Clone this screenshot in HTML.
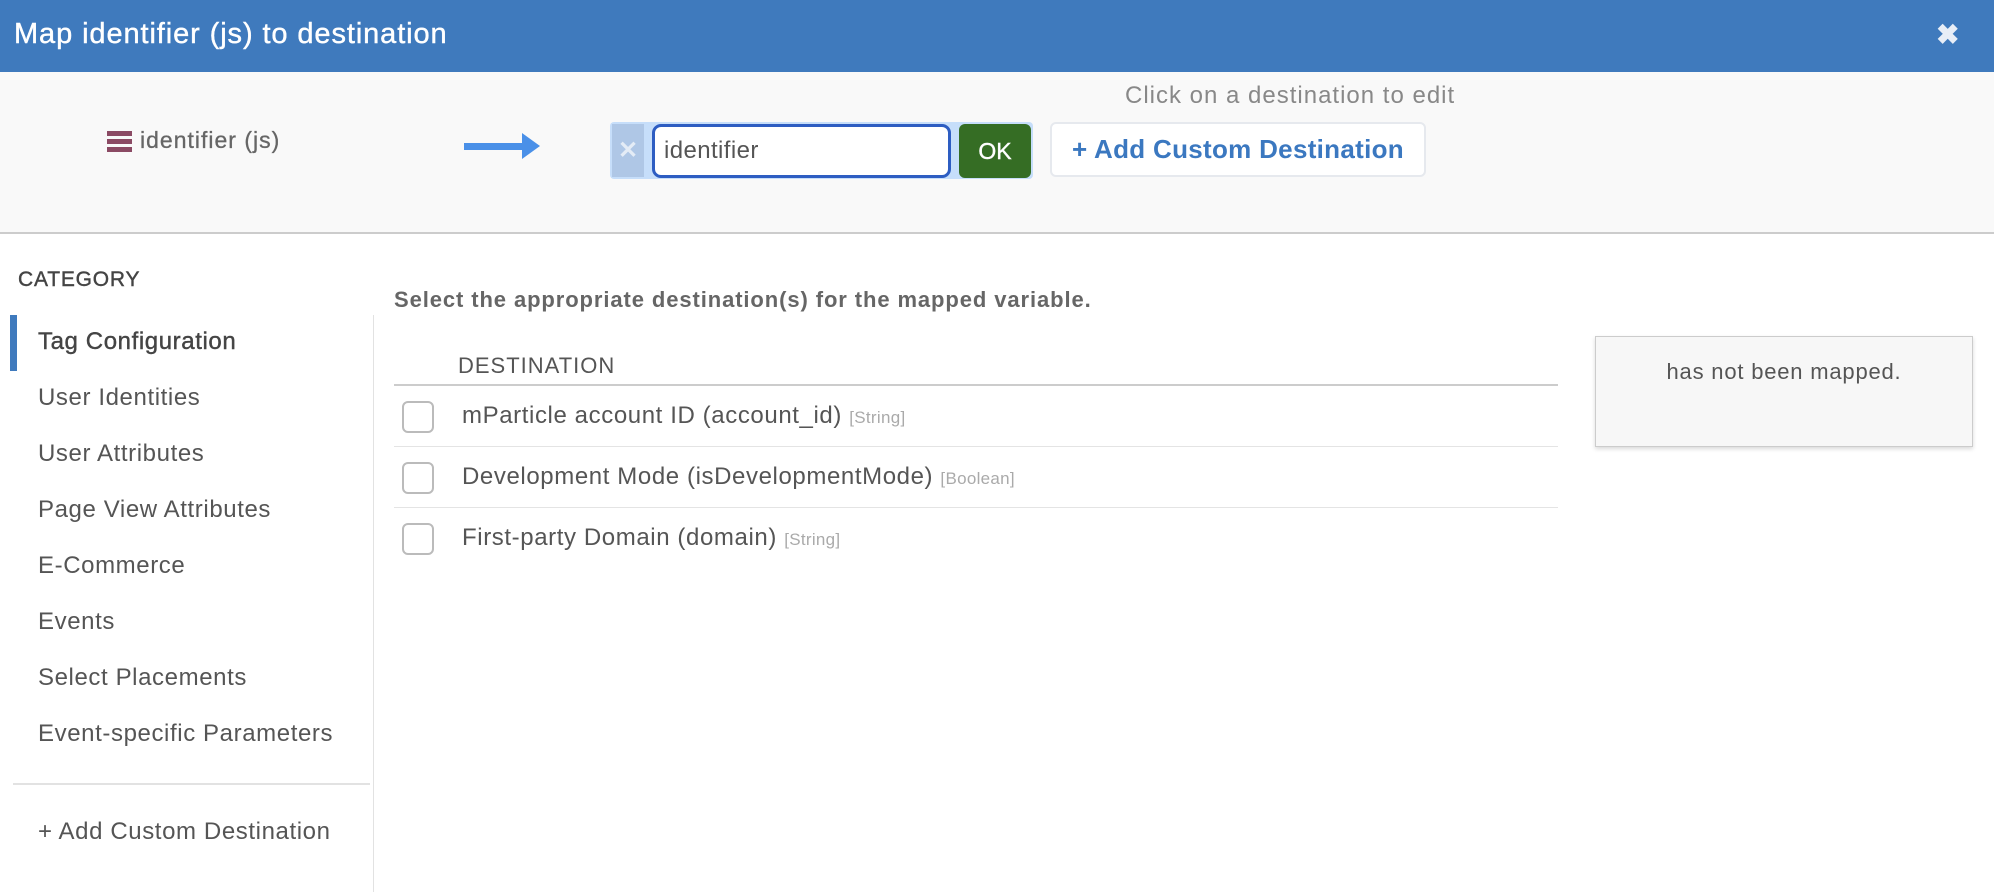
<!DOCTYPE html>
<html><head><meta charset="utf-8"><style>
*{margin:0;padding:0;box-sizing:border-box}
body{width:1994px;height:892px;background:#fff;font-family:"Liberation Sans",sans-serif;position:relative;overflow:hidden;color:#555}
.a{position:absolute;white-space:nowrap}
.s{font-size:24px;line-height:26px;letter-spacing:0.6px}
</style></head><body>
<div class="a" style="left:0;top:0;width:1994px;height:72px;background:#3f7abd"></div>
<div class="a" style="left:14px;top:17px;font-size:29px;color:#fff;line-height:34px;letter-spacing:0.9px;-webkit-text-stroke:0.4px #fff">Map identifier (js) to destination</div>
<div class="a" style="left:1936px;top:20px;font-size:28px;color:#e8eef7;font-weight:bold;line-height:30px">✖</div>
<div class="a" style="left:0;top:72px;width:1994px;height:162px;background:#f9f9f9;border-bottom:2px solid #ccc"></div>
<div class="a" style="left:107px;top:131px;width:25px;height:22px;background:linear-gradient(#8b4a64 0 5px,transparent 5px 8px,#8b4a64 8px 13px,transparent 13px 16px,#8b4a64 16px 21px,transparent 21px)"></div>
<div class="a" style="left:140px;top:127px;font-size:23px;color:#666;line-height:26px;letter-spacing:1px;-webkit-text-stroke:0.3px #666">identifier (js)</div>
<div class="a" style="left:464px;top:143px;width:60px;height:7px;background:#4a90e8"></div>
<div class="a" style="left:522px;top:133px;width:0;height:0;border-left:18px solid #4a90e8;border-top:13px solid transparent;border-bottom:13px solid transparent"></div>
<div class="a" style="left:610px;top:122px;width:423px;height:57px;background:#c6defa;border-radius:4px"></div>
<div class="a" style="left:612px;top:124px;width:32px;height:53px;background:#afc7e6;color:#e4ecf6;font-size:24px;font-weight:bold;text-align:center;line-height:53px">✕</div>
<div class="a" style="left:652px;top:124px;width:299px;height:54px;background:#fff;border:3px solid #2d5dc2;border-radius:9px;font-size:24px;color:#555;line-height:48px;padding-left:9px;letter-spacing:0.4px">identifier</div>
<div class="a" style="left:959px;top:124px;width:72px;height:54px;background:#356d24;border-radius:6px;color:#fff;font-size:23px;text-align:center;line-height:54px;-webkit-text-stroke:0.4px #fff">OK</div>
<div class="a" style="left:1125px;top:83px;font-size:24px;color:#888;line-height:26px;letter-spacing:1px">Click on a destination to edit</div>
<div class="a" style="left:1050px;top:122px;width:376px;height:55px;background:#fff;border:2px solid #e6e9ee;border-radius:6px;color:#3b78c0;font-size:26px;font-weight:bold;text-align:center;line-height:51px;letter-spacing:0.3px">+ Add Custom Destination</div>
<div class="a" style="left:18px;top:268px;font-size:21px;color:#444;line-height:24px;letter-spacing:0.8px;-webkit-text-stroke:0.4px #444">CATEGORY</div>
<div class="a" style="left:10px;top:315px;width:7px;height:56px;background:#3f7abd"></div>
<div class="a" style="left:373px;top:315px;width:1px;height:577px;background:#e2e2e2"></div>
<div class="a s" style="left:38px;top:329px;color:#444;-webkit-text-stroke:0.4px #444">Tag Configuration</div>
<div class="a s" style="left:38px;top:385px">User Identities</div>
<div class="a s" style="left:38px;top:441px">User Attributes</div>
<div class="a s" style="left:38px;top:497px">Page View Attributes</div>
<div class="a s" style="left:38px;top:553px">E-Commerce</div>
<div class="a s" style="left:38px;top:609px">Events</div>
<div class="a s" style="left:38px;top:665px">Select Placements</div>
<div class="a s" style="left:38px;top:721px">Event-specific Parameters</div>
<div class="a" style="left:13px;top:783px;width:357px;height:2px;background:#e2e2e2"></div>
<div class="a s" style="left:38px;top:819px">+ Add Custom Destination</div>
<div class="a" style="left:394px;top:288px;font-size:22px;font-weight:bold;color:#666;line-height:24px;letter-spacing:0.9px">Select the appropriate destination(s) for the mapped variable.</div>
<div class="a" style="left:458px;top:354px;font-size:22px;color:#555;line-height:24px;letter-spacing:1px">DESTINATION</div>
<div class="a" style="left:394px;top:384px;width:1164px;height:2px;background:#ccc"></div>
<div class="a" style="left:394px;top:446px;width:1164px;height:1px;background:#e4e4e4"></div>
<div class="a" style="left:394px;top:507px;width:1164px;height:1px;background:#e4e4e4"></div>
<div class="a" style="left:402px;top:401px;width:32px;height:32px;border:2px solid #bbb;border-radius:6px;background:#fff"></div>
<div class="a" style="left:402px;top:462px;width:32px;height:32px;border:2px solid #bbb;border-radius:6px;background:#fff"></div>
<div class="a" style="left:402px;top:523px;width:32px;height:32px;border:2px solid #bbb;border-radius:6px;background:#fff"></div>
<div class="a s" style="left:462px;top:403px">mParticle account ID (account_id) <span style="font-size:17px;color:#aaa;letter-spacing:0.3px">[String]</span></div>
<div class="a s" style="left:462px;top:464px">Development Mode (isDevelopmentMode) <span style="font-size:17px;color:#aaa;letter-spacing:0.3px">[Boolean]</span></div>
<div class="a s" style="left:462px;top:525px">First-party Domain (domain) <span style="font-size:17px;color:#aaa;letter-spacing:0.3px">[String]</span></div>
<div class="a" style="left:1595px;top:336px;width:378px;height:111px;background:#f7f7f7;border:1px solid #ccc;box-shadow:0 2px 4px rgba(0,0,0,.15)"></div>
<div class="a" style="left:1595px;top:360px;width:378px;text-align:center;font-size:22px;line-height:24px;color:#555;letter-spacing:0.8px">has not been mapped.</div>
</body></html>
